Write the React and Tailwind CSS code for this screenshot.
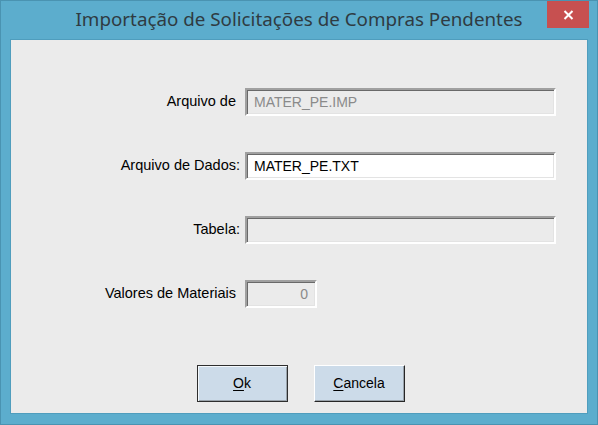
import React from "react";

const sunken =
  "border-2 border-t-[#a0a0a0] border-l-[#a0a0a0] border-b-white border-r-white shadow-[inset_1px_1px_0_#696969,inset_-1px_-1px_0_#e3e3e3]";

const Field = ({ label, value, disabled, width = "w-[311px]", align = "text-left" }) => (
  <div className="flex items-center">
    <div className="w-[229px] text-right text-[14.5px] text-black whitespace-pre">{label}</div>
    <div
      className={`ml-[5px] h-[28px] ${width} ${sunken} flex items-center px-[7px] text-[14px] ${align} ${
        disabled ? "bg-[#ebebeb] text-[#8a8a8a]" : "bg-white text-black"
      }`}
    >
      <span className="w-full">{value}</span>
    </div>
  </div>
);

const Button = ({ first, rest, isDefault }) => (
  <button
    className={`w-[91px] h-[37px] bg-[#ccdbe9] text-[14px] text-black ${
      isDefault
        ? "border border-[#2e2e2e] shadow-[inset_1px_1px_0_#f4f8fb,inset_-1px_-1px_0_#9aa3ab]"
        : "border border-t-white border-l-white border-b-[#262626] border-r-[#262626] shadow-[inset_-1px_-1px_0_#9aa3ab]"
    }`}
  >
    <span className="underline underline-offset-2">{first}</span>
    {rest}
  </button>
);

export default function App() {
  return (
    <div
      className="w-[598px] h-[425px] bg-[#5cadcd] border border-[#4a93b1] flex flex-col"
      style={{ fontFamily: "'Liberation Sans', Arial, sans-serif" }}
    >
      {/* title bar */}
      <div className="relative h-[38px] flex items-center justify-center">
        <span
          className="text-[18.8px] text-[#2f3b42] pb-[2px]"
          style={{ fontFamily: "'Noto Sans', 'Open Sans', sans-serif" }}
        >
          Importação de Solicitações de Compras Pendentes
        </span>
        <div className="absolute top-0 right-[8px] w-[42px] h-[27px] bg-[#c75050] flex items-center justify-center">
          <svg width="11" height="10" viewBox="0 0 11 10">
            <path d="M1.5 1 L9.5 9 M9.5 1 L1.5 9" stroke="#fff" strokeWidth="2" />
          </svg>
        </div>
      </div>

      {/* client area */}
      <div className="mx-[9px] mb-[10px] flex-1 border border-[#4f9dbd] bg-[#ebebeb] flex flex-col">
        <div className="pt-[48px] flex flex-col gap-[36px]">
          <Field label={"Arquivo de "} value="MATER_PE.IMP" disabled />
          <Field label="Arquivo de Dados:" value="MATER_PE.TXT" />
          <Field label="Tabela:" value="" disabled />
          <Field label={"Valores de Materiais "} value="0" disabled width="w-[72px]" align="text-right" />
        </div>
        <div className="mt-[57px] ml-[3px] flex justify-center gap-[26px]">
          <Button first="O" rest="k" isDefault />
          <Button first="C" rest="ancela" />
        </div>
      </div>
    </div>
  );
}
